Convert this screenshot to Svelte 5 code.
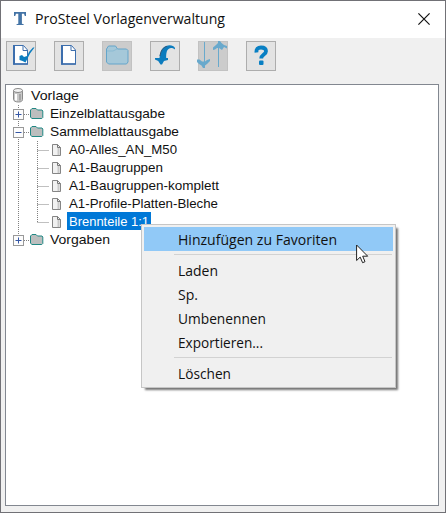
<script lang="ts">
  interface TreeNode {
    label: string;
    kind: "root" | "folder" | "file";
    width: number;
    expanded?: boolean;
    last?: boolean;
  }

  let selected = $state("Brennteile 1:1");
  let hovered = $state("Hinzufügen zu Favoriten");

  const tools = ["apply", "new", "folder", "undo", "sort", "help"];
  const disabled = ["folder", "sort"];

  const nodes: TreeNode[] = [
    { label: "Vorlage", kind: "root", width: 48 },
    { label: "Einzelblattausgabe", kind: "folder", width: 115, expanded: false },
    { label: "Sammelblattausgabe", kind: "folder", width: 129, expanded: true },
    { label: "A0-Alles_AN_M50", kind: "file", width: 108 },
    { label: "A1-Baugruppen", kind: "file", width: 94 },
    { label: "A1-Baugruppen-komplett", kind: "file", width: 150 },
    { label: "A1-Profile-Platten-Bleche", kind: "file", width: 149 },
    { label: "Brennteile 1:1", kind: "file", width: 80, last: true },
    { label: "Vorgaben", kind: "folder", width: 60, expanded: false, last: true },
  ];

  const menu = [
    [{ label: "Hinzufügen zu Favoriten", width: 159 }],
    [
      { label: "Laden", width: 40 },
      { label: "Sp.", width: 20 },
      { label: "Umbenennen", width: 88 },
      { label: "Exportieren...", width: 85 },
    ],
    [{ label: "Löschen", width: 53 }],
  ];
</script>

<!-- label fitted to a fixed advance width -->
{#snippet fitted(text: string, width: number, baseline: number, height: number)}
  <svg class="fitted" {width} {height} aria-label={text}>
    <text x="0" y={baseline} textLength={width} lengthAdjust="spacingAndGlyphs">{text}</text>
  </svg>
{/snippet}

<div class="window">
  <header class="titlebar">
    <svg class="logo" width="12" height="14" viewBox="0 0 12 14">
      <path d="M0 0h12v4h-1.2L10 1.8H7.9v10l1.8.5V13h-7.200v-.7l1.800-.5v-10H2L1.200 4H0z" fill="#4474a6" />
    </svg>
    <h1>{@render fitted("ProSteel Vorlagenverwaltung", 190, 17, 24)}</h1>
    <button class="close" aria-label="Schließen">
      <svg width="12" height="12" viewBox="0 0 12 12">
        <path d="M.4.4l11.2 11.2M11.6.4L.4 11.6" stroke="#111" stroke-width="1.2" />
      </svg>
    </button>
  </header>

  <div class="toolbar">
    {#each tools as tool}
      <button class="tool" class:disabled={disabled.includes(tool)} aria-label={tool}>
        <svg width="28" height="28" viewBox="1 1 28 28">
          {#if tool === "apply" || tool === "new"}
            <path d="M8 4.500h9.500l4 4.500v14H8z" fill="#fff" stroke="#3c6ead" />
            <path d="M8 4v19.500" stroke="#3c6ead" stroke-width="2" />
            <path d="M7 23h15" stroke="#3c6ead" stroke-width="1.500" />
            <path d="M17 5v4.500h4.500" fill="none" stroke="#3c6ead" />
          {/if}
          {#if tool === "apply"}
            <path d="M13.500 15l2.500-1 2 2 3-1 2-4 4-4.500h1.500l-4.500 6-2.500 5-2 4-3-1.500-3-1z" fill="#0b7dc0" />
          {:else if tool === "folder"}
            <path d="M4.500 21V8l2-3h7l2 3h9l1.500 1.500V21L24.500 23h-18z" fill="#a5c8d9" stroke="#64a5ca" />
            <path d="M5 10h6l4-2" fill="none" stroke="#8bbbd3" />
          {:else if tool === "undo"}
            <path d="M25 8.500c-3-2.700-7-1.800-8.200 2-.6 2.200-.7 4.500-.6 6.500h1.800v2l-4 1-2 3.500h-1.500l-2.300-3.500L5 18.500V17h4.500C10 11 12 6.500 16 5c4-1.300 7.500-.6 9 2z" fill="#0c7cbe" />
            <path d="M10 15c.7-5 2.800-8.500 7-9.700" fill="none" stroke="#3b5976" />
          {:else if tool === "sort"}
            <path d="M6.500 1v20M20.500 5v21" stroke="#69a9cc" />
            <path d="M-1 18.500h2.500l2.500 2h3l2-1.500 3-1v2l-3 3-2 1.500V27h-2l-1.500-2.500-2.500-1.500-2-2z" fill="#69a9cc" />
            <path d="M15 6.500l3-2.500 2-2V0h2l1.500 2 2.500 2 3 1v2.500l-3-1.500-2 3-3-2h-2l-2 1.500-2 .5z" fill="#69a9cc" />
          {:else if tool === "help"}
            <path d="M10.500 11.500c-.5-3.500 1.500-5 4.500-5 3.200 0 5 1.500 5 3.700 0 3.300-4.800 3.300-4.800 7.300" fill="none" stroke="#087fc3" stroke-width="3.800" />
            <rect x="13" y="19.500" width="4.500" height="4.500" rx="1" fill="#087fc3" />
          {/if}
        </svg>
      </button>
    {/each}
  </div>

  <div class="tree" role="tree">
    {#each nodes as node}
      <div class="row" role="treeitem" aria-selected={node.label === selected} tabindex="-1">
        {#if node.kind === "root"}
          <svg class="gutter" width="19" height="18">
            <path d="M1.500 3.500v9c0 1.400 2.200 2.500 5 2.500s4-1.100 4-2.500v-9z" fill="#c9c9c9" stroke="#8a8a8a" />
            <ellipse cx="6" cy="3.500" rx="4.500" ry="2" fill="#f4f4f4" stroke="#8a8a8a" />
            <path d="M4 7v6.500" stroke="#fff" stroke-width="2" />
            <path d="M8 7v6.500" stroke="#999" stroke-width="1.500" />
          </svg>
        {:else if node.kind === "folder"}
          <svg class="gutter" width="38" height="18">
            <path d="M6.500 0v{node.last ? 9 : 18}M12 9.500h6" class="dots" />
            <rect x="1.500" y="4.500" width="10" height="10" fill="#fcfcfc" stroke="#999" />
            <path d={node.expanded ? "M3.500 9.500h6" : "M3.500 9.500h6M6.500 6.500v6"} stroke="#3456a5" />
            <path d="M18.500 5l1.500-1.500h4L25.500 5h4.500l.8 1v6.500l-1 1h-10l-1.300-1.500z" fill="#bcbebe" stroke="#218884" />
          </svg>
        {:else}
          <svg class="gutter" width="57" height="18">
            <path d="M6.500 0v18M25.500 0v{node.last ? 9 : 18}M25.500 9.500h11" class="dots" />
            <path d="M40.500 3.500h5l3 3v8h-8z" fill="#f1f1f1" stroke="#858585" />
            <path d="M45.500 3.500v3h3" fill="none" stroke="#777" />
            <path d="M46.500 7v7" stroke="#c8c8c8" stroke-width="2" />
          </svg>
        {/if}
        <button
          class="label"
          class:selected={node.label === selected}
          onclick={() => (selected = node.label)}
        >
          {@render fitted(node.label, node.width, 14, 18)}
        </button>
      </div>
    {/each}
  </div>

  <div class="menu" role="menu">
    {#each menu as group, i}
      {#if i > 0}
        <div class="separator"></div>
      {/if}
      {#each group as item}
        <button
          class="item"
          class:active={item.label === hovered}
          role="menuitem"
          onmouseenter={() => (hovered = item.label)}
        >
          {@render fitted(item.label, item.width, 18, 24)}
        </button>
      {/each}
    {/each}
  </div>

  <svg class="cursor" width="13" height="20" viewBox="0 0 13 20">
    <path d="M.6 1v15.500l3.600-3.400 2.400 5.600 2.400-1-2.300-5.500h5z" fill="#fff" stroke="#222" stroke-width="1" />
  </svg>
</div>

<style>
  :global(body) {
    margin: 0;
    overflow: hidden;
  }

  .window {
    position: relative;
    box-sizing: border-box;
    width: 446px;
    height: 513px;
    display: flex;
    flex-direction: column;
    border: 1px solid #717176;
    background: #f0f0f0;
    color: #111;
  }

  button {
    padding: 0;
    border: 0;
    background: none;
    color: inherit;
    font: inherit;
  }

  svg {
    display: block;
    flex: none;
  }

  .fitted {
    overflow: visible;
  }

  .fitted text {
    fill: currentColor;
  }

  .titlebar {
    box-sizing: border-box;
    display: flex;
    align-items: center;
    height: 37px;
    padding: 0 15px 1px 13px;
    background: #fff;
    font: 15px "Open Sans", "Noto Sans", sans-serif;
  }

  h1 {
    margin: 0 auto 0 9px;
    font: inherit;
  }

  .toolbar {
    display: flex;
    gap: 18px;
    padding: 3px 5px 13px;
  }

  .tool {
    box-sizing: border-box;
    width: 30px;
    height: 30px;
    border: 1px solid #adadad;
    background: #e3e3e3;
  }

  .tool svg {
    overflow: visible;
  }

  .tool.disabled {
    border-color: #c2c2c2;
    background: #cccccc;
  }

  .tree {
    flex: 1;
    margin: 0 6px 6px 4px;
    padding: 2px 6px;
    border: 1px solid #828790;
    background: #fff;
    font: 13.3px "Liberation Sans", Arial, sans-serif;
  }

  .row {
    display: flex;
    height: 18px;
  }

  .dots {
    fill: none;
    stroke: #808080;
    stroke-dasharray: 1 1;
  }

  .label {
    height: 18px;
    margin-top: -1px;
  }

  .label.selected {
    margin-left: -2px;
    padding: 0 2px;
    background: #0078d7;
    color: #fff;
  }

  .menu {
    position: absolute;
    left: 140px;
    top: 223px;
    box-sizing: border-box;
    width: 255px;
    padding: 2px;
    border: 1px solid #c6c6c6;
    background: #f0f0f0;
    box-shadow: 3px 3px 2px -1px rgba(0, 0, 0, 0.55);
    font: 15px "Open Sans", "Noto Sans", sans-serif;
  }

  .item {
    display: flex;
    width: 249px;
    height: 24px;
    padding-left: 34px;
  }

  .item.active {
    background: #91c9f7;
  }

  .separator {
    height: 1px;
    margin: 3px 1px 3px 30px;
    background: #d2d2d2;
  }

  .cursor {
    position: absolute;
    left: 355px;
    top: 243px;
  }
</style>
